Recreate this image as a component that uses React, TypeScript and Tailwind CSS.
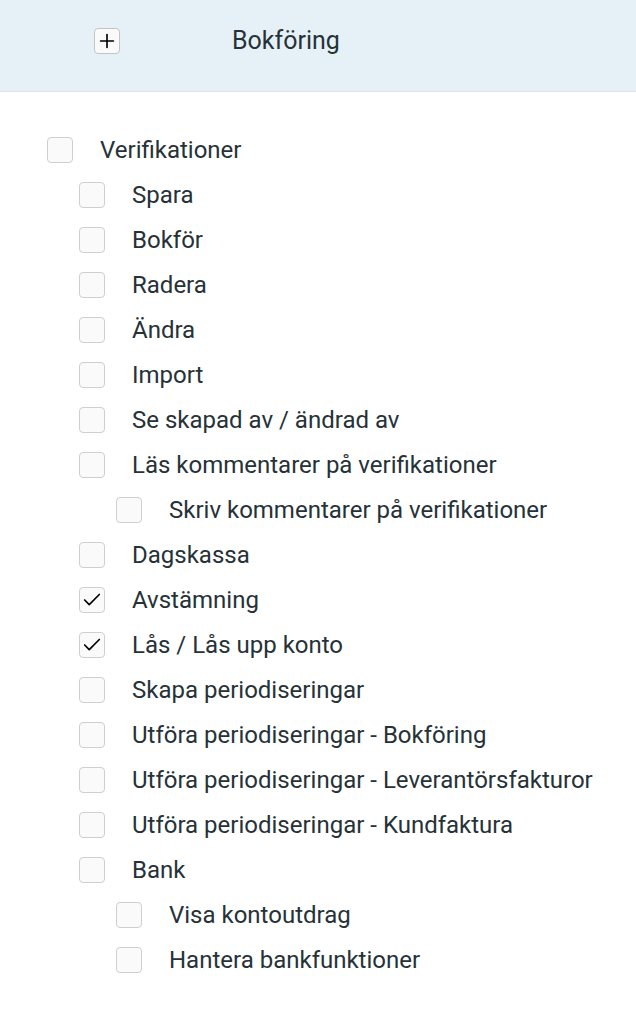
import { Check, Plus } from "lucide-react";

type Item = { label: string; level: number; checked?: boolean };

const ITEMS: Item[] = [
    { label: "Verifikationer", level: 0 },
    { label: "Spara", level: 1 },
    { label: "Bokför", level: 1 },
    { label: "Radera", level: 1 },
    { label: "Ändra", level: 1 },
    { label: "Import", level: 1 },
    { label: "Se skapad av / ändrad av", level: 1 },
    { label: "Läs kommentarer på verifikationer", level: 1 },
    { label: "Skriv kommentarer på verifikationer", level: 2 },
    { label: "Dagskassa", level: 1 },
    { label: "Avstämning", level: 1, checked: true },
    { label: "Lås / Lås upp konto", level: 1, checked: true },
    { label: "Skapa periodiseringar", level: 1 },
    { label: "Utföra periodiseringar - Bokföring", level: 1 },
    { label: "Utföra periodiseringar - Leverantörsfakturor", level: 1 },
    { label: "Utföra periodiseringar - Kundfaktura", level: 1 },
    { label: "Bank", level: 1 },
    { label: "Visa kontoutdrag", level: 2 },
    { label: "Hantera bankfunktioner", level: 2 },
];

const INDENT = ["pl-[47px]", "pl-[79px]", "pl-[116px]"];

function Box({ checked }: { checked?: boolean }) {
    return (
        <span className="flex h-[26px] w-[26px] shrink-0 items-center justify-center rounded-[4px] border border-[#cfcfcf] bg-[#fafafa]">
            {checked && <Check className="h-[22px] w-[22px] text-black" strokeWidth={1.8} />}
        </span>
    );
}

export default function App() {
    return (
        <div className="min-h-[1012px] w-[636px] bg-white font-['Roboto',sans-serif] text-[#263238]">
            <div className="flex h-[92px] items-center border-b border-[#dbe6ec] bg-[#e6f1f7] pb-[10px] pl-[94px]">
                <button className="flex h-[26px] w-[26px] items-center justify-center rounded-[4px] border border-[#c4c4c4] bg-[#fafafa]">
                    <Plus className="h-[22px] w-[22px] text-black" strokeWidth={1.8} />
                </button>
                <span className="ml-[112px] text-[25px] leading-none">Bokföring</span>
            </div>
            <ul className="pt-[35px]">
                {ITEMS.map((item) => (
                    <li key={item.label} className={`flex h-[45px] items-center gap-[27px] ${INDENT[item.level]}`}>
                        <Box checked={item.checked} />
                        <span className="text-[24px] leading-none">{item.label}</span>
                    </li>
                ))}
            </ul>
        </div>
    );
}
